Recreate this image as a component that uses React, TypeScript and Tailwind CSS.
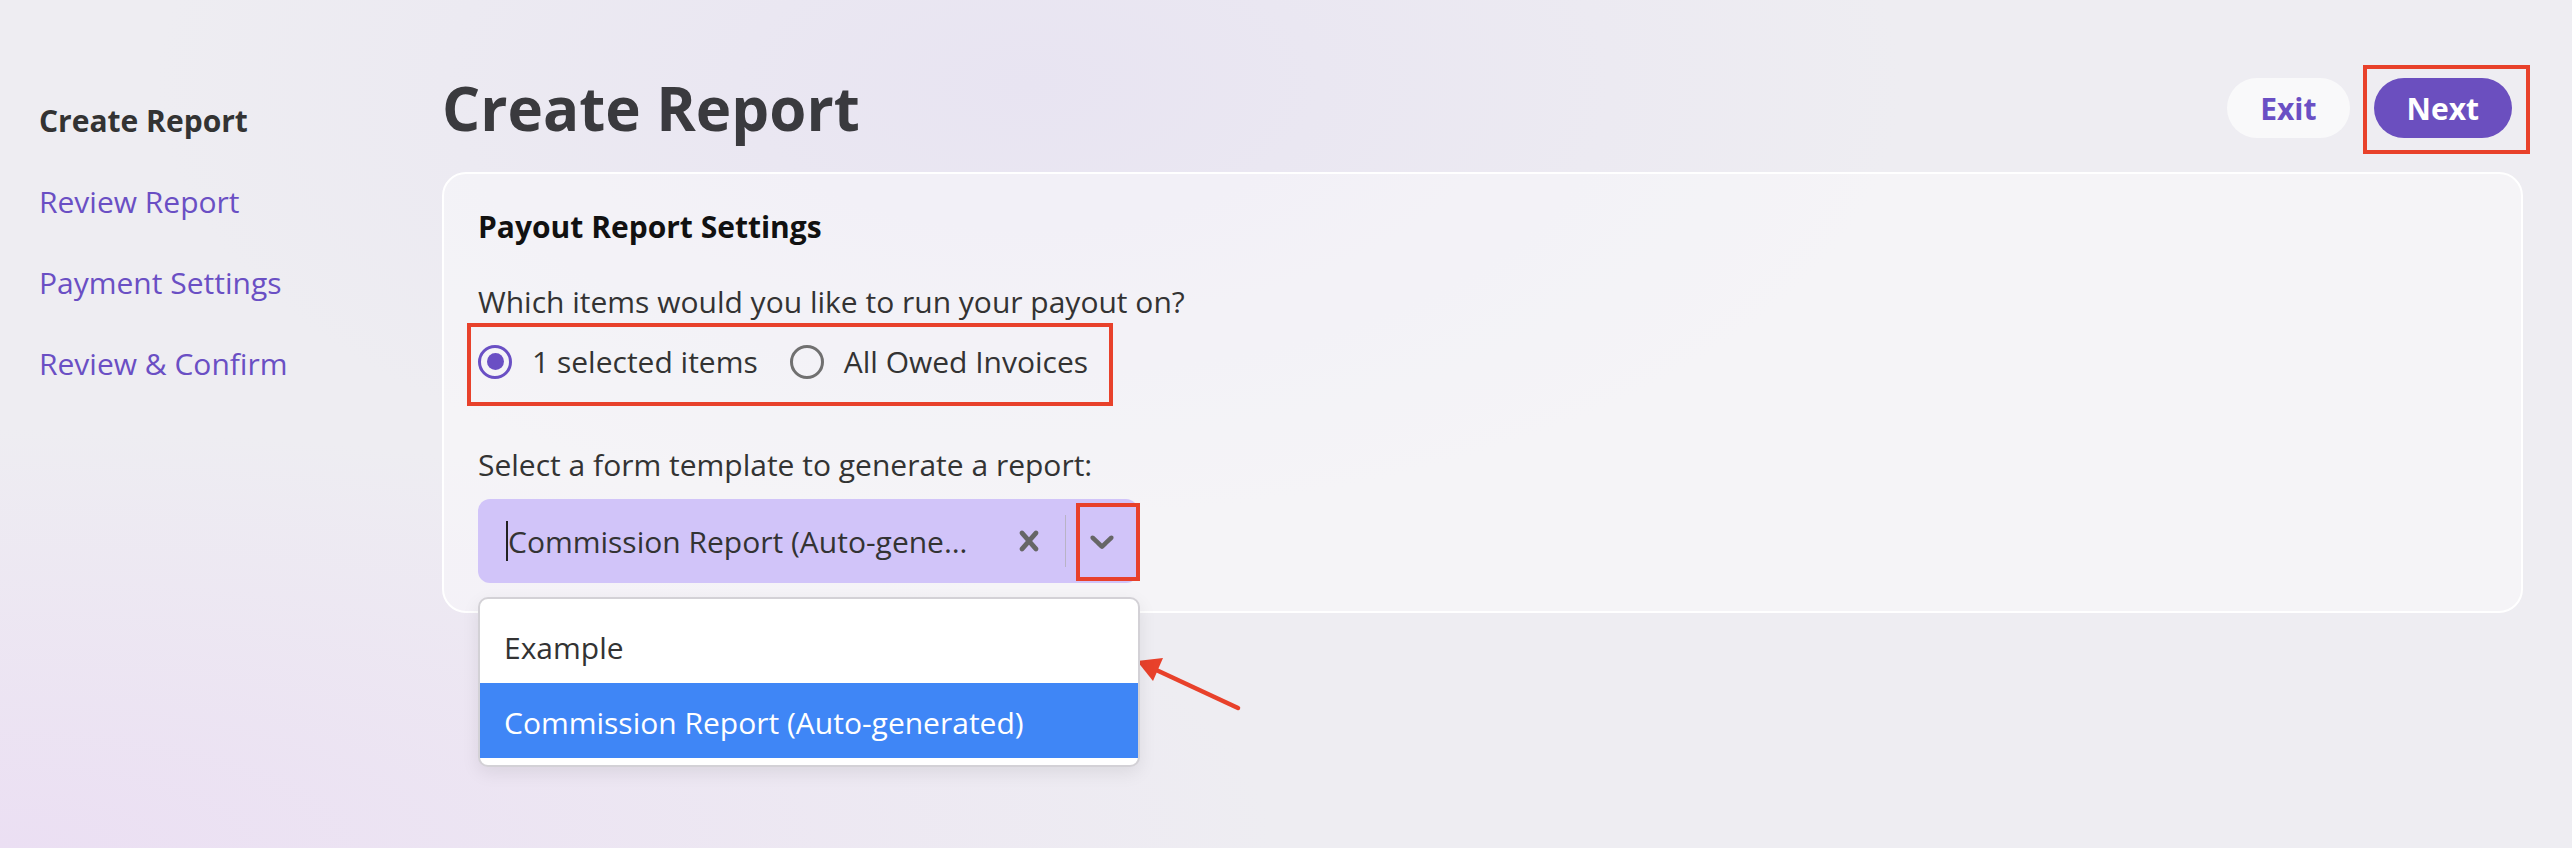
import React from "react";

const steps = ["Review Report", "Payment Settings", "Review & Confirm"];

function Radio({ checked, label }: { checked?: boolean; label: string }) {
  return (
    <label className="flex items-center gap-[20px]">
      {checked ? (
        <span className="flex items-center justify-center w-[34px] h-[34px] rounded-full border-[3px] border-[#6a4fc4]">
          <span className="w-[17px] h-[17px] rounded-full bg-[#6a4fc4]" />
        </span>
      ) : (
        <span className="w-[34px] h-[34px] rounded-full border-[3px] border-[#707070]" />
      )}
      <span className="text-[#333]">{label}</span>
    </label>
  );
}

export default function App() {
  return (
    <div className="relative flex w-full h-[848px] overflow-hidden font-['Open_Sans',sans-serif] text-[30px] bg-[#eeedf2] bg-[radial-gradient(ellipse_at_0%_100%,#ebdff3_0%,transparent_35%),radial-gradient(ellipse_at_40%_10%,#e8e4f2_0%,transparent_40%)]">
      {/* Steps */}
      <nav className="w-[442px] shrink-0 pl-[39px] pt-[101px] flex flex-col gap-[41px] leading-[40px]">
        <span className="font-bold text-[#333]">Create Report</span>
        {steps.map((s) => (
          <span key={s} className="text-[#6a4fc4]">
            {s}
          </span>
        ))}
      </nav>

      <main className="flex-1 pr-[49px] pt-[72px]">
        <div className="flex items-center justify-between h-[72px] pr-[11px]">
          <h1 className="text-[60px] font-bold text-[#3a3a3e] leading-[72px]">Create Report</h1>
          <div className="flex items-center gap-[24px]">
            <button className="h-[60px] px-[33px] rounded-full bg-[#f9f9fa] text-[#6a4fc4] font-bold">Exit</button>
            <div className="relative">
              <button className="h-[60px] px-[33px] rounded-full bg-[#6b4fbf] text-white font-bold">Next</button>
              <span className="absolute left-[-11px] top-[-13px] w-[167px] h-[89px] border-[4px] border-[#e8412b]" />
            </div>
          </div>
        </div>

        {/* Settings card */}
        <section className="mt-[28px] rounded-[24px] border-2 border-white bg-white/40 px-[34px] pt-[30px] pb-[28px] leading-[45px]">
          <h2 className="font-bold text-[#111]">Payout Report Settings</h2>
          <p className="mt-[30px] text-[#333]">Which items would you like to run your payout on?</p>

          <div className="relative mt-[15px] h-[45px] flex items-center gap-[32px] w-fit">
            <Radio checked label="1 selected items" />
            <Radio label="All Owed Invoices" />
            <span className="absolute left-[-11px] top-[-16px] w-[646px] h-[83px] border-[4px] border-[#e8412b]" />
          </div>

          <p className="mt-[58px] text-[#333]">Select a form template to generate a report:</p>

          <div className="relative mt-[12px] w-[660px] h-[84px] rounded-[12px] bg-[#d1c4f9] flex items-center">
            <div className="flex-1 flex items-center pl-[28px] min-w-0">
              <span className="w-[2px] h-[40px] bg-[#222]" />
              <span className="text-[#333] whitespace-nowrap">Commission Report (Auto-gene…</span>
            </div>
            <div className="flex items-center h-full">
              <span className="px-[16px] text-[#666]">
                <svg viewBox="0 0 20 20" className="w-[40px] h-[40px]" fill="currentColor">
                  <path d="M14.348 14.849c-0.469 0.469-1.229 0.469-1.697 0l-2.651-3.030-2.651 3.029c-0.469 0.469-1.229 0.469-1.697 0-0.469-0.469-0.469-1.229 0-1.697l2.758-3.150-2.759-3.152c-0.469-0.469-0.469-1.228 0-1.697s1.228-0.469 1.697 0l2.652 3.031 2.651-3.031c0.469-0.469 1.228-0.469 1.697 0s0.469 1.229 0 1.697l-2.758 3.152 2.758 3.150c0.469 0.469 0.469 1.229 0 1.698z" />
                </svg>
              </span>
              <span className="w-px h-[52px] bg-[#b9b3c6]" />
              <span className="px-[16px] text-[#666]">
                <svg viewBox="0 0 20 20" className="w-[40px] h-[40px]" fill="currentColor">
                  <path d="M4.516 7.548c0.436-0.446 1.043-0.481 1.576 0l3.908 3.747 3.908-3.747c0.533-0.481 1.141-0.446 1.574 0 0.436 0.445 0.408 1.197 0 1.615-0.406 0.418-4.695 4.502-4.695 4.502-0.217 0.223-0.502 0.335-0.787 0.335s-0.57-0.112-0.789-0.335c0 0-4.287-4.084-4.695-4.502s-0.436-1.17 0-1.615z" />
                </svg>
              </span>
            </div>
            <span className="absolute left-[598px] top-[4px] w-[64px] h-[78px] border-[4px] border-[#e8412b]" />

            {/* Open menu */}
            <ul className="absolute z-10 left-0 top-[98px] w-[662px] rounded-[10px] border-2 border-[#d3d1d6] bg-white py-[7px] shadow-[0_6px_18px_rgba(0,0,0,0.08)] leading-[40px]">
              <li className="h-[77px] flex items-center pl-[24px] pt-[6px] text-[#333]">Example</li>
              <li className="h-[75px] flex items-center pl-[24px] pt-[5px] bg-[#3f86f6] text-white">Commission Report (Auto-generated)</li>
            </ul>

            {/* Annotation arrow */}
            <svg className="absolute left-[652px] top-[150px] w-[115px] h-[70px]" viewBox="0 0 115 70">
              <line x1="108" y1="59" x2="22" y2="19" stroke="#e8412b" strokeWidth="4.5" strokeLinecap="round" />
              <polygon points="7,12 33,9 23,32" fill="#e8412b" />
            </svg>
          </div>
        </section>
      </main>
    </div>
  );
}
